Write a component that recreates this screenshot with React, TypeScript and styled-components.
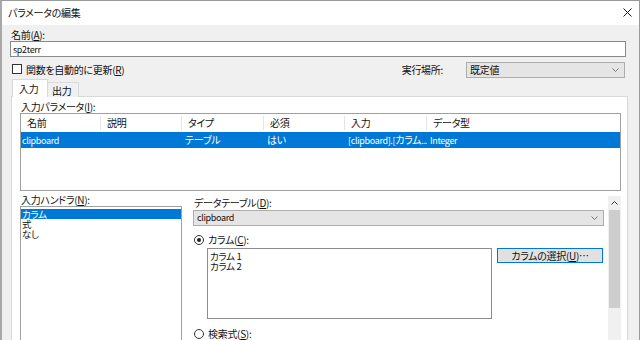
import React, {FC, ReactNode} from 'react';
import styled, {createGlobalStyle} from 'styled-components';

const GlobalStyle = createGlobalStyle`
  * {
    box-sizing: border-box;
  }

  html, body {
    margin: 0;
    padding: 0;
    background: #fff;
  }

  body {
    font-family: "Noto Sans CJK JP", "Noto Sans", sans-serif;
    font-size: 10px;
    color: #111;
    letter-spacing: -0.3px;
    font-feature-settings: "palt";
  }
`

// latin text in the original dialog (Meiryo UI) is much narrower than the CJK fallback
const Latin = styled.span`
  font-size: 9px;
  letter-spacing: -0.35px;
`

const columns = [
    {title: '名前', width: 80},
    {title: '説明', width: 81},
    {title: 'タイプ', width: 82},
    {title: '必須', width: 81},
    {title: '入力', width: 82},
    {title: 'データ型', width: 0},
]

const row: ReactNode[] = [
    <Latin>clipboard</Latin>,
    '',
    'テーブル',
    'はい',
    <><Latin>[clipboard].[</Latin>カラム<Latin>...</Latin></>,
    <Latin>Integer</Latin>,
]

const handlers = ['カラム', '式', 'なし']

const Chevron: FC<{ up?: boolean }> = ({up}) => <svg width="7" height="4" viewBox="0 0 7 4">
    <polyline points={up ? '0.5,3.5 3.5,0.5 6.5,3.5' : '0.5,0.5 3.5,3.5 6.5,0.5'}
              fill="none" stroke={up ? '#333' : '#777'} strokeWidth="1"/>
</svg>

const App: FC = () => {
    const gridCols = columns.map(c => c.width ? c.width + 'px' : '1fr').join(' ')

    return <Window>
        <GlobalStyle/>
        <TitleBar>
            <span>パラメータの編集</span>
            <svg width="9" height="9" viewBox="0 0 9 9">
                <path d="M0.5 0.5 L8.5 8.5 M8.5 0.5 L0.5 8.5" stroke="#111" strokeWidth="1"/>
            </svg>
        </TitleBar>

        <Body>
            <Label $top={3}>名前(<u>A</u>):</Label>
            <TextBox><Latin>sp2terr</Latin></TextBox>

            <OptionsRow>
                <CheckRow>
                    <CheckBox/>
                    <span>関数を自動的に更新(<u>R</u>)</span>
                </CheckRow>
                <CheckRow>
                    <span>実行場所:</span>
                    <Combo $width={159} $right={3}>
                        <span>既定値</span>
                        <Chevron/>
                    </Combo>
                </CheckRow>
            </OptionsRow>

            <TabStrip>
                <Tab $active>入力</Tab>
                <Tab>出力</Tab>
            </TabStrip>

            <TabPanel>
                <Label $top={3}>入力パラメータ(<u>I</u>):</Label>
                <ListView>
                    <HeaderRow $cols={gridCols}>
                        {columns.map(c => <HeaderCell key={c.title}>{c.title}</HeaderCell>)}
                    </HeaderRow>
                    <DataRow $cols={gridCols}>
                        {row.map((v, i) => <DataCell key={i} $first={i === 0}>{v}</DataCell>)}
                    </DataRow>
                </ListView>

                <BottomGrid>
                    <div>
                        <Label $top={0}>入力ハンドラ(<u>N</u>):</Label>
                        <ListBox>
                            {handlers.map((h, i) => <ListItem key={h} $selected={i === 0}>{h}</ListItem>)}
                        </ListBox>
                    </div>

                    <ScrollPane>
                        <ScrollContent>
                            <Label $top={0}>データテーブル(<u>D</u>):</Label>
                            <Combo $top={1}>
                                <Latin>clipboard</Latin>
                                <Chevron/>
                            </Combo>

                            <RadioRow $top={7}>
                                <Radio $checked/>
                                <span>カラム(<u>C</u>):</span>
                            </RadioRow>

                            <ColumnsRow>
                                <ColumnList>
                                    <div>カラム 1</div>
                                    <div>カラム 2</div>
                                </ColumnList>
                                <SelectButton>カラムの選択(<u>U</u>)…</SelectButton>
                            </ColumnsRow>

                            <RadioRow $top={8}>
                                <Radio/>
                                <span>検索式(<u>S</u>):</span>
                            </RadioRow>
                        </ScrollContent>

                        <ScrollBar>
                            <ScrollArrow><Chevron up/></ScrollArrow>
                            <ScrollThumb/>
                        </ScrollBar>
                    </ScrollPane>
                </BottomGrid>
            </TabPanel>
        </Body>
    </Window>
};
export default App;

const Window = styled.div`
  width: 640px;
  height: 340px;
  overflow: hidden;
  display: flex;
  flex-direction: column;
  border: 1px solid #9a9a9a;
  border-left: 2px solid #a8a8a8;
  border-bottom: none;
  background: #f0f0f0;
`

const TitleBar = styled.div`
  flex: 0 0 24px;
  display: flex;
  align-items: center;
  justify-content: space-between;
  padding: 0 7px 0 6px;
  background: #fff;
  line-height: 24px;

  svg {
    margin-top: -1px;
  }
`

const Body = styled.div`
  flex: 1;
  min-height: 0;
  display: flex;
  flex-direction: column;
  padding: 0 11px 0 8px;
`

const Label = styled.div<{ $top: number }>`
  margin-top: ${p => p.$top}px;
  padding-left: 1px;
  height: 13px;
  line-height: 13px;
  white-space: nowrap;
`

const TextBox = styled.div`
  height: 16px;
  margin-right: 2px;
  border: 1px solid #8a8a8a;
  background: #fff;
  padding-left: 2px;
  line-height: 14px;
`

const OptionsRow = styled.div`
  margin-top: 5px;
  height: 16px;
  display: flex;
  justify-content: space-between;
  align-items: center;
`

const CheckRow = styled.div`
  display: flex;
  align-items: center;
  gap: 4px;
  line-height: 16px;

  & + & {
    gap: 23px;
  }
`

const CheckBox = styled.span`
  width: 10px;
  height: 10px;
  margin-left: 2px;
  margin-top: -2px;
  border: 1px solid #333;
  background: #fff;
`

const Combo = styled.div<{ $width?: number, $top?: number, $right?: number }>`
  ${p => p.$width ? `width: ${p.$width}px;` : ''}
  margin-top: ${p => p.$top || 0}px;
  margin-right: ${p => p.$right || 0}px;
  height: 16px;
  display: flex;
  align-items: center;
  justify-content: space-between;
  padding: 0 5px 0 3px;
  background: #e5e5e5;
  border: 1px solid #adadad;
  line-height: 14px;
`

const TabStrip = styled.div`
  position: relative;
  z-index: 1;
  margin-top: 1px;
  height: 18px;
  display: flex;
  align-items: flex-end;
  padding-left: 2px;
`

const Tab = styled.div<{ $active?: boolean }>`
  height: ${p => p.$active ? 18 : 15}px;
  width: ${p => p.$active ? 36 : 31}px;
  line-height: ${p => p.$active ? 18 : 15}px;
  padding-left: ${p => p.$active ? 6 : 4}px;
  background: ${p => p.$active ? '#fff' : '#f0f0f0'};
  border: 1px solid #d9d9d9;
  border-bottom: none;
  ${p => p.$active ? '' : 'border-left: none;'}
`

const TabPanel = styled.div`
  margin: -1px 0 0 1px;
  background: #fff;
  border: 1px solid #d9d9d9;
  padding: 0 6px 0 8px;
  display: flex;
  flex-direction: column;
`

const ListView = styled.div`
  height: 78px;
  border: 1px solid #a0a0a0;
  background: #fff;
`

const HeaderRow = styled.div<{ $cols: string }>`
  display: grid;
  grid-template-columns: ${p => p.$cols};
  height: 18px;
`

const HeaderCell = styled.div`
  margin: 2px 0;
  padding-left: 6px;
  line-height: 14px;
  border-right: 1px solid #e5e5e5;

  &:last-child {
    border-right: none;
  }
`

const DataRow = styled.div<{ $cols: string }>`
  display: grid;
  grid-template-columns: ${p => p.$cols};
  height: 16px;
  background: #0078d7;
  color: #fff;
`

const DataCell = styled.div<{ $first?: boolean }>`
  padding-left: ${p => p.$first ? 1 : 3}px;
  line-height: 16px;
  white-space: nowrap;
  overflow: hidden;
`

const BottomGrid = styled.div`
  margin-top: 2px;
  display: grid;
  grid-template-columns: 162px 1fr;
  column-gap: 6px;
`

const ListBox = styled.div`
  height: 150px;
  border: 1px solid #a0a0a0;
  padding: 2px 0 0 0;
  background: #fff;
`

const ListItem = styled.div<{ $selected?: boolean }>`
  height: 10px;
  line-height: 10px;
  font-size: 9.5px;
  padding-left: 1px;
  background: ${p => p.$selected ? '#0078d7' : 'transparent'};
  color: ${p => p.$selected ? '#fff' : '#111'};
`

const ScrollPane = styled.div`
  margin-top: 3px;
  height: 150px;
  display: flex;
`

const ScrollContent = styled.div`
  flex: 1;
  display: flex;
  flex-direction: column;
  padding: 0 4px 0 5px;
`

const RadioRow = styled.div<{ $top: number }>`
  margin-top: ${p => p.$top}px;
  margin-left: 1px;
  height: 14px;
  display: flex;
  align-items: center;
  gap: 4px;
  line-height: 14px;
`

const Radio = styled.span<{ $checked?: boolean }>`
  width: 10px;
  height: 10px;
  border-radius: 50%;
  border: 1px solid #333;
  background: #fff;
  display: flex;
  align-items: center;
  justify-content: center;

  &::after {
    content: '';
    width: 4px;
    height: 4px;
    border-radius: 50%;
    background: ${p => p.$checked ? '#222' : 'transparent'};
  }
`

const ColumnsRow = styled.div`
  margin-top: 1px;
  display: flex;
  align-items: flex-start;
  gap: 5px;
`

const ColumnList = styled.div`
  margin-left: 14px;
  width: 285px;
  height: 71px;
  border: 1px solid #8c8c8c;
  padding: 2px 0 0 2px;
  font-size: 9.5px;
  line-height: 10px;
`

const SelectButton = styled.div`
  width: 106px;
  height: 15px;
  border: 1px solid #0078d7;
  background: #e1e1e1;
  text-align: center;
  line-height: 13px;
`

const ScrollBar = styled.div`
  flex: 0 0 13px;
  display: flex;
  flex-direction: column;
  background: #f0f0f0;
`

const ScrollArrow = styled.div`
  height: 13px;
  display: flex;
  align-items: center;
  justify-content: center;
`

const ScrollThumb = styled.div`
  height: 98px;
  margin: 1px 1px 0;
  background: #cdcdcd;
`
